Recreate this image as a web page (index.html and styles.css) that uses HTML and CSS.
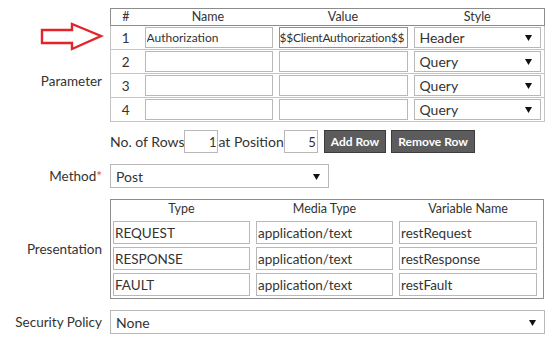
FILE: index.html
```html
<!DOCTYPE html>
<html lang="en">
  <head>
    <meta charset="UTF-8" />
    <title>REST Service</title>
    <link rel="stylesheet" href="styles.css">
  </head>
  <body>
    <div class="form">
      <!-- annotation arrow pointing at row 1 -->
      <svg class="arrow" width="64" height="30" viewBox="0 0 64 30">
        <polygon points="2,8 32,8 32,2 61,14 32,27 32,21 2,21" fill="none" stroke="#e3242b" stroke-width="2.4" />
      </svg>

      <!-- Parameter -->
      <div class="label">Parameter</div>
      <div class="field">
        <table class="param-table">
          <colgroup>
            <col class="c-num">
            <col class="c-name">
            <col class="c-value">
            <col class="c-style">
          </colgroup>
          <thead>
            <tr>
              <th>#</th>
              <th>Name</th>
              <th>Value</th>
              <th>Style</th>
            </tr>
          </thead>
          <tbody>
            <tr>
              <td class="col-num">1</td>
              <td><input class="txt" type="text" value="Authorization"></td>
              <td><input class="txt focused" type="text" value="$$ClientAuthorization$$"></td>
              <td>
                <select class="sel">
                  <option selected>Header</option>
                  <option>Query</option>
                </select>
              </td>
            </tr>
            <tr>
              <td class="col-num">2</td>
              <td><input class="txt" type="text"></td>
              <td><input class="txt" type="text"></td>
              <td><select class="sel"><option>Query</option></select></td>
            </tr>
            <tr>
              <td class="col-num">3</td>
              <td><input class="txt" type="text"></td>
              <td><input class="txt" type="text"></td>
              <td><select class="sel"><option>Query</option></select></td>
            </tr>
            <tr>
              <td class="col-num">4</td>
              <td><input class="txt" type="text"></td>
              <td><input class="txt" type="text"></td>
              <td><select class="sel"><option>Query</option></select></td>
            </tr>
          </tbody>
        </table>

        <div class="row-controls">
          <span>No. of Rows</span>
          <input class="small-num" type="text" value="1">
          <span>at Position</span>
          <input class="small-num" type="text" value="5">
          <button class="btn">Add Row</button>
          <button class="btn">Remove Row</button>
        </div>
      </div>

      <!-- Method -->
      <div class="label">Method<span class="req">*</span></div>
      <div class="field">
        <select class="sel method-sel">
          <option>Post</option>
          <option>Get</option>
        </select>
      </div>

      <!-- Presentation -->
      <div class="label">Presentation</div>
      <div class="field">
        <div class="pres-table">
          <div class="pres-head">Type</div>
          <div class="pres-head">Media Type</div>
          <div class="pres-head">Variable Name</div>

          <input class="txt" type="text" value="REQUEST">
          <input class="txt" type="text" value="application/text">
          <input class="txt" type="text" value="restRequest">

          <input class="txt" type="text" value="RESPONSE">
          <input class="txt" type="text" value="application/text">
          <input class="txt" type="text" value="restResponse">

          <input class="txt" type="text" value="FAULT">
          <input class="txt" type="text" value="application/text">
          <input class="txt" type="text" value="restFault">
        </div>
      </div>

      <!-- Security Policy -->
      <div class="label">Security Policy</div>
      <div class="field">
        <select class="sel policy-sel">
          <option>None</option>
        </select>
      </div>
    </div>
  </body>
</html>
```

FILE: styles.css
```css
body {
  margin: 0;
  padding: 8px 0 0 0;
  background-color: #ffffff;
  font-family: Lato, "Open Sans", Arial, sans-serif;
  font-size: 13px;
  color: #333333;
}

.form {
  position: relative;
  display: grid;
  grid-template-columns: 102px 435px;
  column-gap: 8px;
  row-gap: 11px;
}

.arrow {
  position: absolute;
  left: 40px;
  top: 14px;
}

.label {
  align-self: center;
  text-align: right;
  white-space: nowrap;
  color: #333333;
  font-size: 13.5px;
}

.req {
  color: #e04848;
}

.field {
  display: flex;
  flex-direction: column;
}

/* Parameter table */
.param-table {
  width: 435px;
  border-collapse: collapse;
  table-layout: fixed;
}

.c-num {
  width: 30px;
}

.c-name,
.c-value {
  width: 135px;
}

.param-table th {
  font-weight: normal;
  font-size: 12.5px;
  height: 16px;
  line-height: 16px;
  padding: 0;
  border-top: 1px solid #8c8c8c;
  border-bottom: 1px solid #8c8c8c;
}

.param-table th:first-child {
  border-left: 1px solid #8c8c8c;
}

.param-table th:last-child {
  border-right: 1px solid #8c8c8c;
}

.param-table tbody tr {
  border: 1px solid #c4c4c4;
}

.param-table td {
  padding: 1px 3px;
  height: 21px;
}

.param-table .col-num {
  text-align: center;
  font-size: 13.5px;
}

.param-table td:nth-child(2) {
  padding-left: 4px;
}

.param-table .txt,
.param-table .sel {
  height: 21px;
}

.param-table .txt {
  font-size: 12px;
}

.txt {
  box-sizing: border-box;
  display: block;
  width: 100%;
  height: 23px;
  margin: 0;
  padding: 0 1px;
  border: 1px solid #b8b8b8;
  border-radius: 0;
  font-family: Lato, "Open Sans", Arial, sans-serif;
  font-size: 13px;
  color: #333333;
  background: #ffffff;
  outline: none;
}

.param-table .txt.focused {
  border-color: #5b9ddc;
  letter-spacing: -0.25px;
  padding: 0;
  text-decoration: underline wavy #e03030;
  text-decoration-thickness: 1px;
  text-underline-offset: 2px;
}

.sel {
  box-sizing: border-box;
  display: block;
  width: 100%;
  height: 23px;
  margin: 0;
  padding: 0 20px 0 5px;
  border: 1px solid #b8b8b8;
  border-radius: 0;
  font-family: Lato, "Open Sans", Arial, sans-serif;
  font-size: 14px;
  color: #333333;
  -webkit-appearance: none;
  appearance: none;
  background: #ffffff url("data:image/svg+xml,%3Csvg xmlns='http://www.w3.org/2000/svg' width='7' height='7'%3E%3Cpolygon points='0,1 7,1 3.5,7' fill='%23111'/%3E%3C/svg%3E") no-repeat right 8px center;
}

/* Row controls */
.row-controls {
  display: flex;
  align-items: center;
  margin-top: 8px;
  height: 23px;
  font-size: 14px;
}

.small-num {
  box-sizing: border-box;
  width: 34px;
  height: 23px;
  margin: 0;
  padding: 0 1px;
  border: 1px solid #b8b8b8;
  text-align: right;
  font-family: Lato, "Open Sans", Arial, sans-serif;
  font-size: 13px;
  color: #333333;
}

.btn {
  height: 23px;
  margin-left: 6px;
  padding: 0 6px;
  background-color: #5c5c5c;
  color: #ffffff;
  border: 1px solid #3c3c3c;
  border-radius: 0;
  font-family: Lato, "Open Sans", Arial, sans-serif;
  font-size: 12px;
  font-weight: bold;
  cursor: pointer;
}

.btn + .btn {
  margin-left: 5px;
}

.method-sel {
  width: 219px;
  height: 24px;
}

/* Presentation */
.pres-table {
  display: grid;
  grid-template-columns: 137px 137px 138px;
  column-gap: 6px;
  row-gap: 3px;
  width: 434px;
  box-sizing: border-box;
  padding: 0 6px 2px 2px;
  border: 1px solid #8c8c8c;
}

.pres-head {
  text-align: center;
  font-size: 12.5px;
  height: 18px;
  line-height: 18px;
}

.pres-table .txt {
  font-size: 13.5px;
}

.policy-sel {
  height: 24px;
}
```
